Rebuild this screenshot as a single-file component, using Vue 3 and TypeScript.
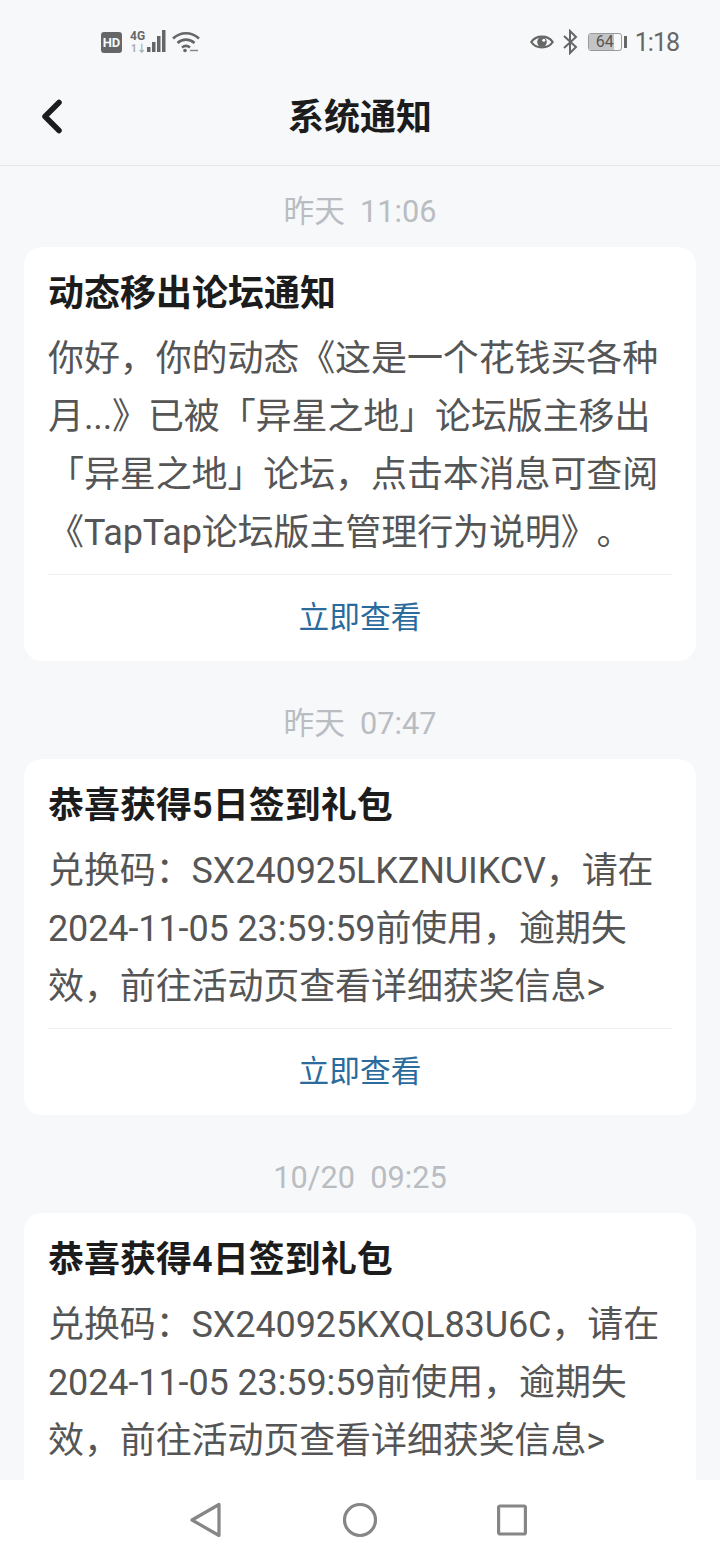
<script setup lang="ts">
interface Notice {
  time: string
  title: string
  lines: string[]
  action: string
}

const notices: Notice[] = [
  {
    time: '昨天  11:06',
    title: '动态移出论坛通知',
    lines: [
      '你好，你的动态《这是一个花钱买各种',
      '月...》已被「异星之地」论坛版主移出',
      '「异星之地」论坛，点击本消息可查阅',
      '《TapTap论坛版主管理行为说明》。'
    ],
    action: '立即查看'
  },
  {
    time: '昨天  07:47',
    title: '恭喜获得5日签到礼包',
    lines: [
      '兑换码：SX240925LKZNUIKCV，请在',
      '2024-11-05 23:59:59前使用，逾期失',
      '效，前往活动页查看详细获奖信息>'
    ],
    action: '立即查看'
  },
  {
    time: '10/20  09:25',
    title: '恭喜获得4日签到礼包',
    lines: [
      '兑换码：SX240925KXQL83U6C，请在',
      '2024-11-05 23:59:59前使用，逾期失',
      '效，前往活动页查看详细获奖信息>'
    ],
    action: '立即查看'
  }
]
</script>

<template>
  <div class="screen">
    <div class="status-bar">
      <div class="status-left">
        <span class="hd">HD</span>
        <svg class="signal" width="38" height="24" viewBox="0 0 38 24">
          <text x="0" y="10" class="net">4G</text>
          <text x="1" y="22" class="net dim">1↓</text>
          <rect x="17" y="17" width="3.500" height="5" fill="#666" />
          <rect x="22" y="12" width="3.500" height="10" fill="#666" />
          <rect x="27" y="6" width="3.500" height="16" fill="#666" />
          <rect x="32" y="0" width="3.500" height="22" fill="#666" />
        </svg>
        <svg class="wifi" width="28" height="24" viewBox="0 0 28 24" fill="none" stroke="#666" stroke-width="2.600">
          <path d="M1 8.500C8.500 1.500 19.500 1.500 27 8.500" />
          <path d="M5.500 13C10.500 8.500 17.500 8.500 22.500 13" />
          <path d="M10 17.500C12.500 15.500 15.500 15.500 18 17.500" />
          <circle cx="13" cy="20.500" r="1.800" fill="#666" stroke="none" />
          <path d="M18 20.500H26" stroke-width="1.500" stroke="#888" />
        </svg>
      </div>
      <div class="status-right">
        <svg width="24" height="16" viewBox="0 0 24 16" fill="none">
          <path d="M1.300 8C6 .8 18 .8 22.700 8C18 15.200 6 15.200 1.300 8Z" stroke="#666" stroke-width="2.200" />
          <circle cx="12" cy="8" r="4.800" fill="#666" />
          <circle cx="13.800" cy="6.200" r="1.500" fill="#fff" />
        </svg>
        <svg width="16" height="26" viewBox="0 0 16 26" fill="none" stroke="#666" stroke-width="2">
          <path d="M2 7L14 18L8 24V2L14 8L2 19" />
        </svg>
        <div class="battery">
          <div class="battery-body"><span class="battery-level"></span><span class="battery-num">64</span></div>
          <span class="battery-cap"></span>
        </div>
        <span class="clock">1:18</span>
      </div>
    </div>

    <div class="header">
      <svg class="back" width="24" height="36" viewBox="0 0 24 36" fill="none">
        <path d="M19 3.500L5 17.500L19 31.500" stroke="#1c1c1c" stroke-width="5.500" stroke-linecap="round" stroke-linejoin="round" />
      </svg>
      <span class="header-title">系统通知</span>
    </div>

    <div class="list">
      <div v-for="n in notices" :key="n.title" class="group">
        <div class="time">{{ n.time }}</div>
        <div class="card">
          <div class="title">{{ n.title }}</div>
          <div class="body">
            <div v-for="line in n.lines" :key="line" class="line">{{ line }}</div>
          </div>
          <div class="action">{{ n.action }}</div>
        </div>
      </div>
    </div>

    <div class="nav">
      <svg width="34" height="36" viewBox="0 0 34 36" fill="none" stroke="#868686" stroke-width="3.200" stroke-linejoin="round">
        <path d="M3 18L30 2.500V33.500Z" />
      </svg>
      <svg width="36" height="36" viewBox="0 0 36 36" fill="none" stroke="#868686" stroke-width="3.200">
        <circle cx="18" cy="18" r="15.500" />
      </svg>
      <svg width="30" height="32" viewBox="0 0 30 32" fill="none" stroke="#868686" stroke-width="3.200" stroke-linejoin="round">
        <rect x="1.600" y="2" width="26.800" height="28" rx="1.500" />
      </svg>
    </div>
  </div>
</template>

<style>
body {
  margin: 0;
  background: #f6f8fa;
}
</style>

<style scoped>
.screen {
  width: 720px;
  height: 1560px;
  display: flex;
  flex-direction: column;
  overflow: hidden;
  background: #f6f8fa;
  font-family: Roboto, "Noto Sans CJK SC", sans-serif;
  text-spacing-trim: space-all;
}

.status-bar {
  height: 82px;
  flex-shrink: 0;
  display: flex;
  justify-content: space-between;
  align-items: center;
  padding: 2px 41px 0 101px;
  box-sizing: border-box;
}

.status-left,
.status-right {
  display: flex;
  align-items: center;
}

.hd {
  width: 21px;
  height: 21px;
  border-radius: 3px;
  background: #666;
  color: #f6f8fa;
  font-size: 13px;
  font-weight: 700;
  line-height: 21px;
  text-align: center;
}

.signal {
  margin-left: 8px;
}

.net {
  font-size: 12px;
  font-weight: 700;
  fill: #666;
}

.net.dim {
  fill: #aaa;
  font-size: 10px;
}

.wifi {
  margin-left: 4px;
}

.status-right {
  gap: 8px;
}

.battery {
  display: flex;
  align-items: center;
  margin-left: 2px;
}

.battery-body {
  position: relative;
  width: 32px;
  height: 16px;
  border: 1.500px solid #999;
  border-radius: 3px;
  overflow: hidden;
}

.battery-level {
  display: block;
  width: 78%;
  height: 100%;
  background: #c4c4c4;
}

.battery-num {
  position: absolute;
  inset: 0;
  font-size: 16px;
  line-height: 16px;
  text-align: center;
  color: #555;
}

.battery-cap {
  width: 3px;
  height: 12px;
  margin-left: 2px;
  background: #666;
}

.clock {
  font-size: 25px;
  letter-spacing: -1px;
  color: #666;
}

.header {
  height: 84px;
  flex-shrink: 0;
  display: grid;
  grid-template-columns: 1fr auto 1fr;
  align-items: center;
  padding-bottom: 20px;
  box-sizing: border-box;
  border-bottom: 1px solid #e3e5e8;
}

.back {
  margin: 6px 0 0 40px;
}

.header-title {
  font-size: 36px;
  font-weight: 700;
  color: #1c1c1c;
}

.list {
  flex: 1;
  min-height: 0;
  overflow: hidden;
  padding: 0 24px;
}

.time {
  height: 81px;
  padding-top: 11px;
  box-sizing: border-box;
  display: flex;
  align-items: center;
  justify-content: center;
  white-space: pre;
  font-size: 30.700px;
  line-height: 40px;
  color: #b9bdc2;
}

.group + .group .time {
  height: 98px;
  padding-top: 28px;
}

.card {
  background: #fff;
  border-radius: 18px;
  padding: 0 24px;
}

.title {
  height: 81px;
  padding-top: 5px;
  box-sizing: border-box;
  display: flex;
  align-items: center;
  font-size: 36px;
  font-weight: 700;
  color: #1c1c1c;
}

.body {
  padding: 1.500px 0 11.500px;
  border-bottom: 1px solid #eff1f3;
}

.line {
  height: 58.300px;
  line-height: 58.300px;
  font-size: 36px;
  letter-spacing: -0.110px;
  color: #555;
  white-space: nowrap;
}

.action {
  height: 86px;
  padding-bottom: 8px;
  box-sizing: border-box;
  display: flex;
  align-items: center;
  justify-content: center;
  font-size: 30.700px;
  color: #2a6a9c;
}

.nav {
  height: 80px;
  flex-shrink: 0;
  background: #fff;
  display: flex;
  align-items: center;
  justify-content: space-between;
  padding: 0 193px 0 189px;
  box-sizing: border-box;
}
</style>
